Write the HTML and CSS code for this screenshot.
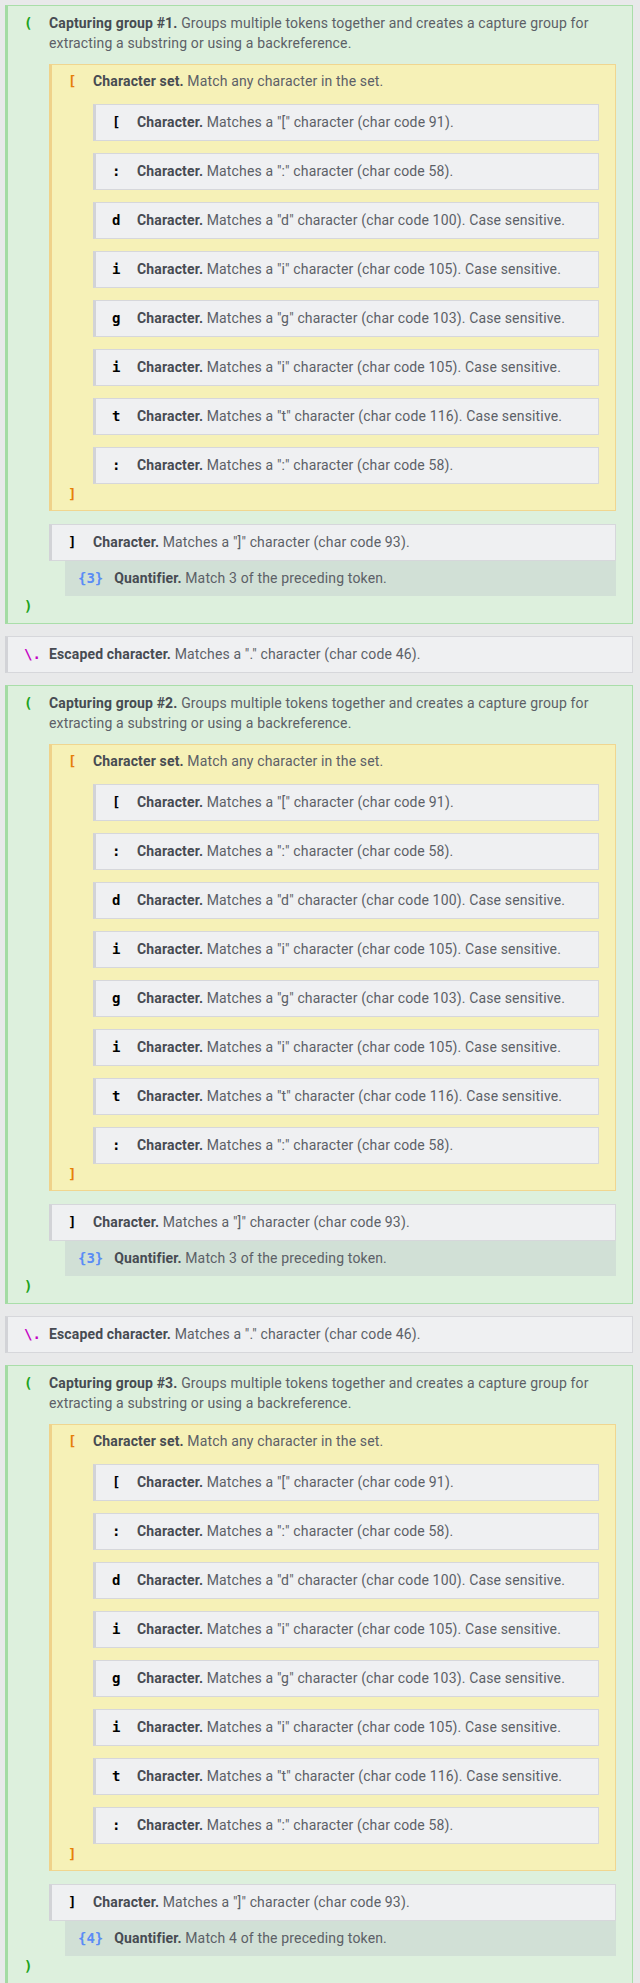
FILE: index.html
```html
<!DOCTYPE html>
<html>

<head>
	<meta charset="utf-8">
	<link rel="stylesheet" href="styles.css">
</head>

<body>
	<div class="explain">

		<div class="node group">
			<div class="row"><span class="tok paren">(</span>
				<p><b>Capturing group #1.</b> Groups multiple tokens together and creates a capture group for extracting a substring or using a backreference.</p>
			</div>
			<div class="children">
				<div class="node set">
					<div class="row"><span class="tok bracket">[</span>
						<p><b>Character set.</b> Match any character in the set.</p>
					</div>
					<div class="children list">
						<div class="node char row"><span class="tok">[</span><p><b>Character.</b> Matches a "[" character (char code 91).</p></div>
						<div class="node char row"><span class="tok">:</span><p><b>Character.</b> Matches a ":" character (char code 58).</p></div>
						<div class="node char row"><span class="tok">d</span><p><b>Character.</b> Matches a "d" character (char code 100). Case sensitive.</p></div>
						<div class="node char row"><span class="tok">i</span><p><b>Character.</b> Matches a "i" character (char code 105). Case sensitive.</p></div>
						<div class="node char row"><span class="tok">g</span><p><b>Character.</b> Matches a "g" character (char code 103). Case sensitive.</p></div>
						<div class="node char row"><span class="tok">i</span><p><b>Character.</b> Matches a "i" character (char code 105). Case sensitive.</p></div>
						<div class="node char row"><span class="tok">t</span><p><b>Character.</b> Matches a "t" character (char code 116). Case sensitive.</p></div>
						<div class="node char row"><span class="tok">:</span><p><b>Character.</b> Matches a ":" character (char code 58).</p></div>
					</div>
					<div class="row"><span class="tok bracket">]</span></div>
				</div>
				<div class="node char row"><span class="tok">]</span><p><b>Character.</b> Matches a "]" character (char code 93).</p></div>
				<div class="quant"><span class="tok">{3}</span><p><b>Quantifier.</b> Match 3 of the preceding token.</p></div>
			</div>
			<div class="row"><span class="tok paren">)</span></div>
		</div>

		<div class="node char row escaped"><span class="tok">\.</span><p><b>Escaped character.</b> Matches a "." character (char code 46).</p></div>

		<div class="node group">
			<div class="row"><span class="tok paren">(</span>
				<p><b>Capturing group #2.</b> Groups multiple tokens together and creates a capture group for extracting a substring or using a backreference.</p>
			</div>
			<div class="children">
				<div class="node set">
					<div class="row"><span class="tok bracket">[</span>
						<p><b>Character set.</b> Match any character in the set.</p>
					</div>
					<div class="children list">
						<div class="node char row"><span class="tok">[</span><p><b>Character.</b> Matches a "[" character (char code 91).</p></div>
						<div class="node char row"><span class="tok">:</span><p><b>Character.</b> Matches a ":" character (char code 58).</p></div>
						<div class="node char row"><span class="tok">d</span><p><b>Character.</b> Matches a "d" character (char code 100). Case sensitive.</p></div>
						<div class="node char row"><span class="tok">i</span><p><b>Character.</b> Matches a "i" character (char code 105). Case sensitive.</p></div>
						<div class="node char row"><span class="tok">g</span><p><b>Character.</b> Matches a "g" character (char code 103). Case sensitive.</p></div>
						<div class="node char row"><span class="tok">i</span><p><b>Character.</b> Matches a "i" character (char code 105). Case sensitive.</p></div>
						<div class="node char row"><span class="tok">t</span><p><b>Character.</b> Matches a "t" character (char code 116). Case sensitive.</p></div>
						<div class="node char row"><span class="tok">:</span><p><b>Character.</b> Matches a ":" character (char code 58).</p></div>
					</div>
					<div class="row"><span class="tok bracket">]</span></div>
				</div>
				<div class="node char row"><span class="tok">]</span><p><b>Character.</b> Matches a "]" character (char code 93).</p></div>
				<div class="quant"><span class="tok">{3}</span><p><b>Quantifier.</b> Match 3 of the preceding token.</p></div>
			</div>
			<div class="row"><span class="tok paren">)</span></div>
		</div>

		<div class="node char row escaped"><span class="tok">\.</span><p><b>Escaped character.</b> Matches a "." character (char code 46).</p></div>

		<div class="node group">
			<div class="row"><span class="tok paren">(</span>
				<p><b>Capturing group #3.</b> Groups multiple tokens together and creates a capture group for extracting a substring or using a backreference.</p>
			</div>
			<div class="children">
				<div class="node set">
					<div class="row"><span class="tok bracket">[</span>
						<p><b>Character set.</b> Match any character in the set.</p>
					</div>
					<div class="children list">
						<div class="node char row"><span class="tok">[</span><p><b>Character.</b> Matches a "[" character (char code 91).</p></div>
						<div class="node char row"><span class="tok">:</span><p><b>Character.</b> Matches a ":" character (char code 58).</p></div>
						<div class="node char row"><span class="tok">d</span><p><b>Character.</b> Matches a "d" character (char code 100). Case sensitive.</p></div>
						<div class="node char row"><span class="tok">i</span><p><b>Character.</b> Matches a "i" character (char code 105). Case sensitive.</p></div>
						<div class="node char row"><span class="tok">g</span><p><b>Character.</b> Matches a "g" character (char code 103). Case sensitive.</p></div>
						<div class="node char row"><span class="tok">i</span><p><b>Character.</b> Matches a "i" character (char code 105). Case sensitive.</p></div>
						<div class="node char row"><span class="tok">t</span><p><b>Character.</b> Matches a "t" character (char code 116). Case sensitive.</p></div>
						<div class="node char row"><span class="tok">:</span><p><b>Character.</b> Matches a ":" character (char code 58).</p></div>
					</div>
					<div class="row"><span class="tok bracket">]</span></div>
				</div>
				<div class="node char row"><span class="tok">]</span><p><b>Character.</b> Matches a "]" character (char code 93).</p></div>
				<div class="quant"><span class="tok">{4}</span><p><b>Quantifier.</b> Match 4 of the preceding token.</p></div>
			</div>
			<div class="row"><span class="tok paren">)</span></div>
		</div>

	</div>
</body>

</html>
```

FILE: styles.css
```css
body {
	margin: 0;
	padding: 5px 7px 0 5px;
	background-color: #e8e9ea;
	font: 14px/20px Roboto, "Liberation Sans", sans-serif;
	letter-spacing: 0.15px;
	color: #5c6067;
}

p {
	margin: 0;
}

b {
	color: #474b52;
}

.explain {
	display: flex;
	flex-direction: column;
	gap: 12px;
}

.node {
	border: 1px solid;
	border-left-width: 3px;
	padding: 7px 16px;
}

.row {
	display: grid;
	grid-template-columns: 25px 1fr;
}

.tok {
	font: bold 14px/20px "DejaVu Sans Mono", monospace;
	letter-spacing: 0;
	color: #000000;
}

.paren {
	color: #1ca21c;
}

.bracket {
	color: #e6800a;
}

.group {
	background-color: #ddf0dd;
	border-color: #a9dea9;
	border-left-color: #a4dba4;
}

.children {
	margin-left: 25px;
}

.group > .children {
	margin-top: 11px;
}

.set {
	padding: 6px 16px;
	margin-bottom: 13px;
	background-color: #f6f1b7;
	border-color: #f0d690;
	border-left-color: #efd28a;
}

.list {
	display: flex;
	flex-direction: column;
	gap: 12px;
	margin-top: 13px;
}

.char {
	padding: 7px 16px 8px;
	background-color: #eff0f2;
	border-color: #d6d7db;
	border-left-color: #d2d3d7;
}

.escaped .tok {
	color: #c400c4;
}

.quant {
	display: flex;
	gap: 11px;
	margin-left: 16px;
	padding: 7px 13px 8px;
	background-color: #d1e0d6;
}

.quant .tok {
	color: #5b8cf5;
}
```
